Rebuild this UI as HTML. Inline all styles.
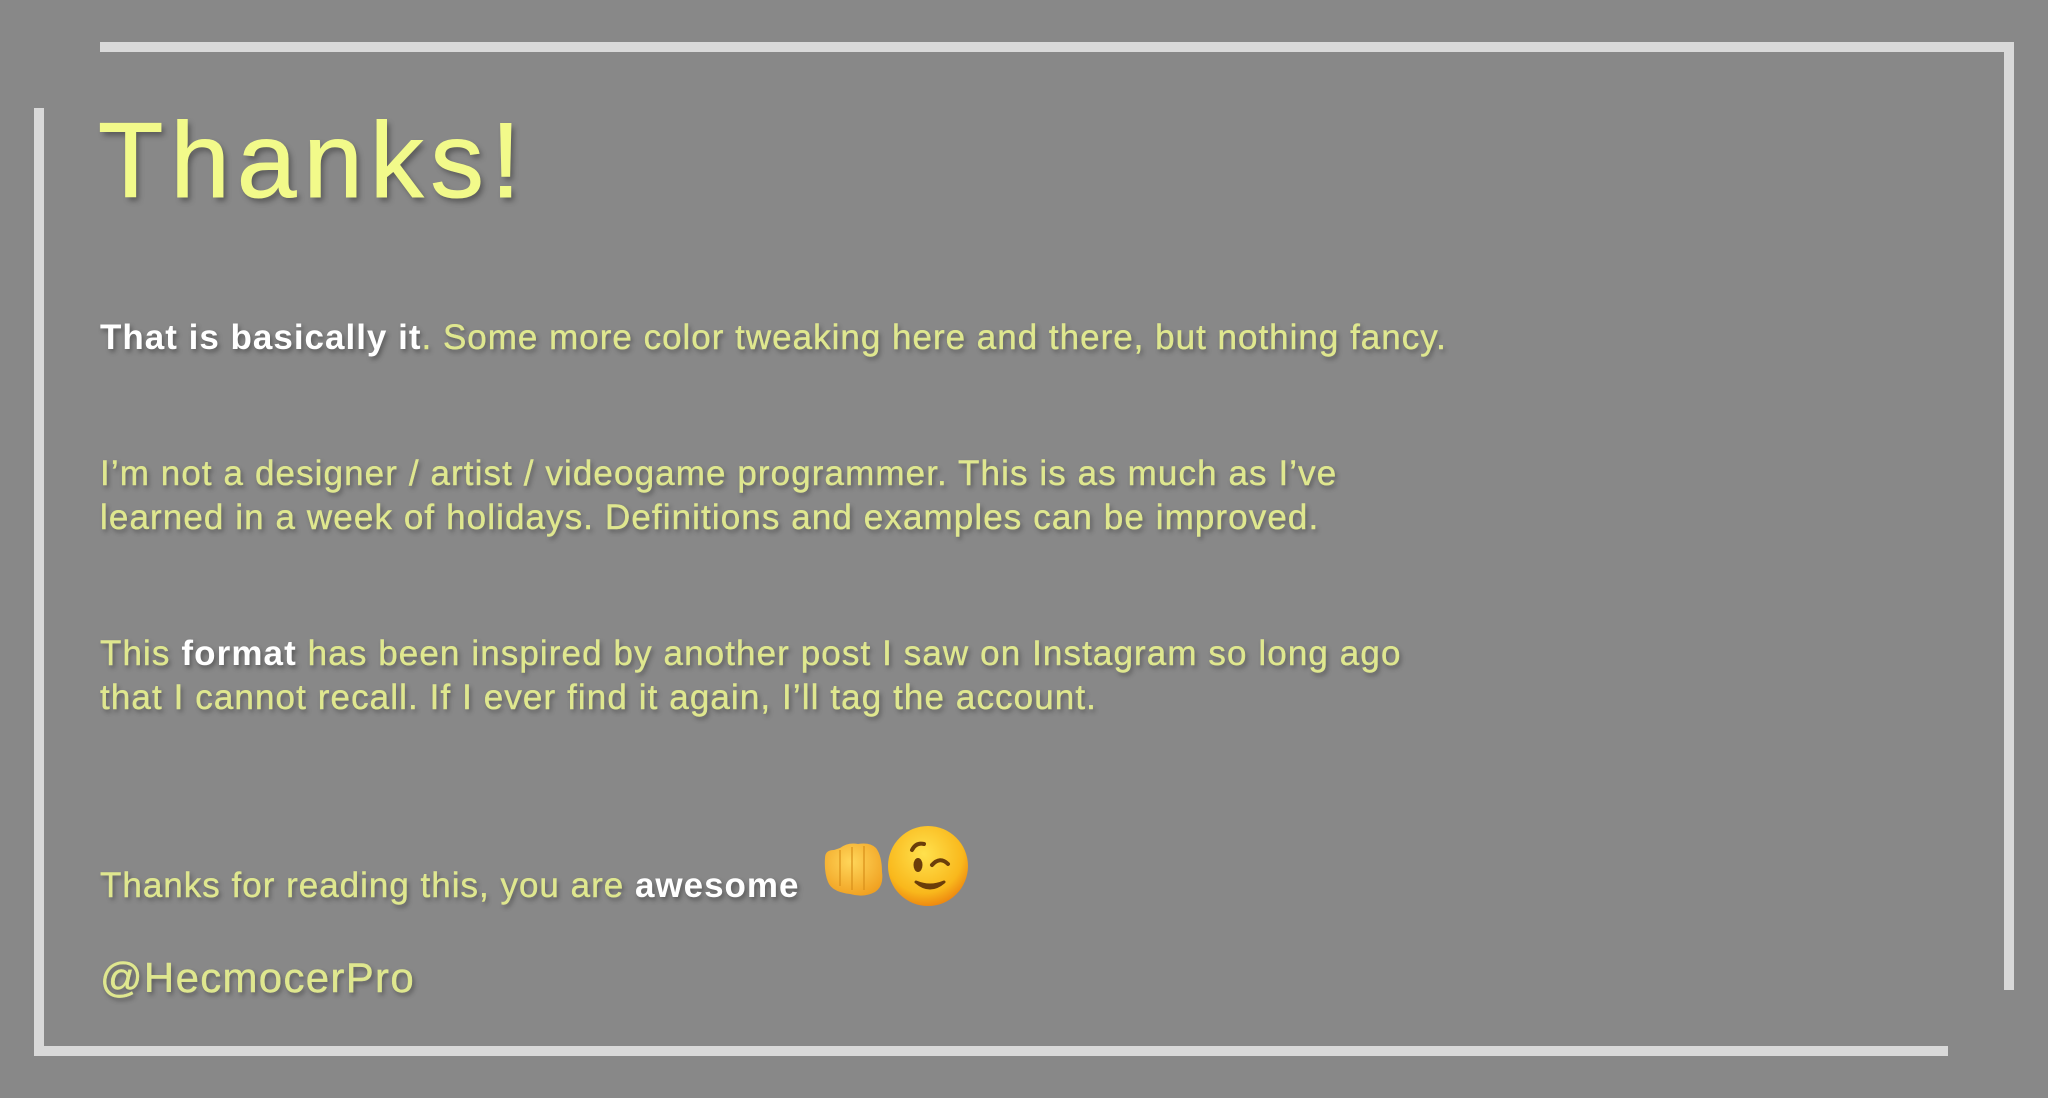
<!DOCTYPE html>
<html><head><meta charset="utf-8"><style>
html,body{margin:0;padding:0}
body{width:2048px;height:1098px;background:#888888;position:relative;overflow:hidden;font-family:"Liberation Sans",Arial,sans-serif}
.bar{position:absolute;background:#d9d9d9}
.t{position:absolute;left:100px;white-space:nowrap;color:#dfe78f;text-shadow:2px 3px 5px rgba(0,0,0,.35);font-size:35px;line-height:44px;letter-spacing:1.1px;-webkit-text-stroke:0.4px #dfe78f}
.t b{color:#fff;-webkit-text-stroke:0}
h1{position:absolute;left:98px;top:90px;margin:0;font-weight:normal;font-size:107px;line-height:140px;color:#f2fa8a;letter-spacing:7px;text-shadow:3px 4px 6px rgba(0,0,0,.35);font-family:"Liberation Sans",sans-serif;-webkit-text-stroke:1px #f2fa8a}
</style></head><body>
<div class="bar" style="left:100px;top:42px;width:1914px;height:10px"></div>
<div class="bar" style="left:2004px;top:42px;width:10px;height:948px"></div>
<div class="bar" style="left:34px;top:108px;width:10px;height:948px"></div>
<div class="bar" style="left:34px;top:1046px;width:1914px;height:10px"></div>
<h1>Thanks!</h1>
<div class="t" style="top:316px;letter-spacing:1px"><b>That is basically it</b>. Some more color tweaking here and there, but nothing fancy.</div>
<div class="t" style="top:452px">I’m not a designer / artist / videogame programmer. This is as much as I’ve<br>learned in a week of holidays. Definitions and examples can be improved.</div>
<div class="t" style="top:632px">This <b>format</b> has been inspired by another post I saw on Instagram so long ago<br>that I cannot recall. If I ever find it again, I’ll tag the account.</div>
<div class="t" style="top:864px;letter-spacing:1px">Thanks for reading this, you are <b>awesome</b></div>
<div class="t" style="top:952px;font-size:42px;line-height:52px;letter-spacing:1.3px">@HecmocerPro</div>
<svg style="position:absolute;left:820px;top:820px" width="160" height="92" viewBox="0 0 160 92">
<defs>
<radialGradient id="f" cx="45%" cy="35%" r="70%"><stop offset="0" stop-color="#ffd65a"/><stop offset="1" stop-color="#f0a020"/></radialGradient>
<radialGradient id="y" cx="45%" cy="35%" r="65%"><stop offset="0" stop-color="#ffe14d"/><stop offset=".75" stop-color="#f9b81c"/><stop offset="1" stop-color="#ee8a10"/></radialGradient>
</defs>
<path d="M5 38 Q5 30 14 30 L20 28 Q28 22 38 24 Q50 22 56 28 Q62 36 62 52 Q64 66 55 72 Q44 78 30 74 Q12 72 8 62 Q4 52 5 38Z" fill="url(#f)"/>
<path d="M20 30 V66 M32 27 V70 M44 26 V70" stroke="#d9901a" stroke-width="2" opacity=".6"/>
<circle cx="108" cy="46" r="40" fill="url(#y)"/>
<path d="M92 30 Q96 22 104 24" stroke="#6b3d0a" stroke-width="4" fill="none" stroke-linecap="round"/>
<ellipse cx="98" cy="45" rx="4.5" ry="7" fill="#6b3d0a"/>
<path d="M112 45 Q120 36 128 44" stroke="#6b3d0a" stroke-width="4" fill="none" stroke-linecap="round"/>
<path d="M96 62 Q110 74 124 62 Q110 68 96 62Z" fill="#6b3d0a" stroke="#6b3d0a" stroke-width="3" stroke-linejoin="round"/>
</svg>
</body></html>
